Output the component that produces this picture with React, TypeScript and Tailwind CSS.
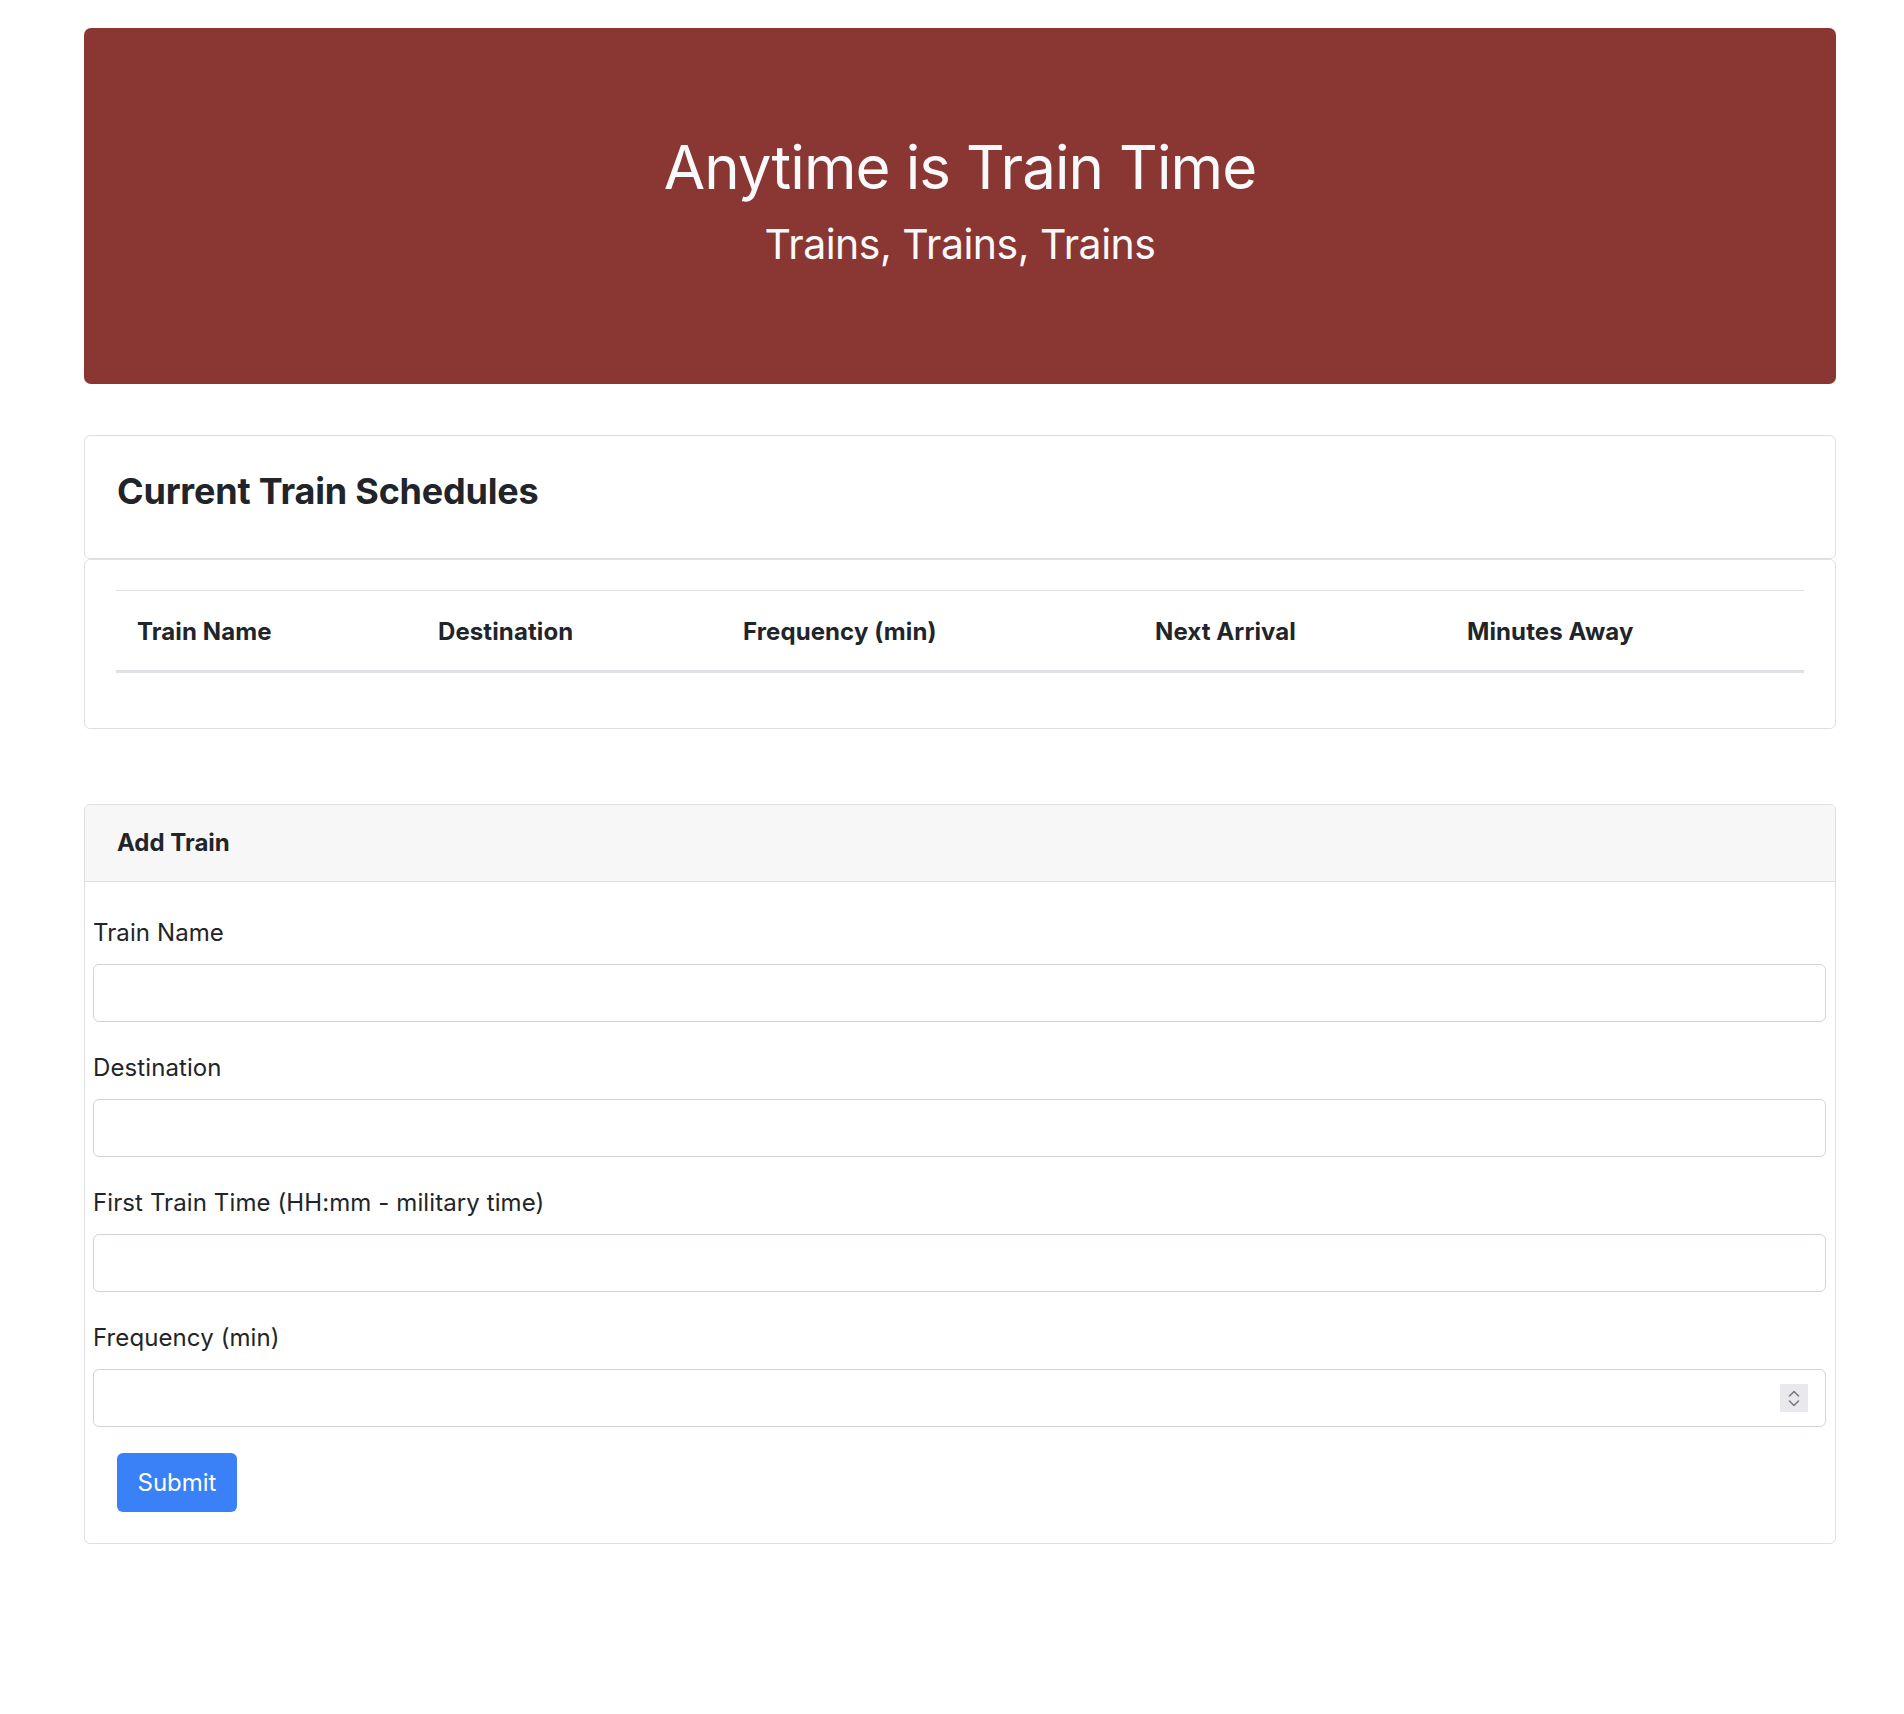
const columns = [
  { label: "Train Name", width: "w-[301px]" },
  { label: "Destination", width: "w-[305px]" },
  { label: "Frequency (min)", width: "w-[412px]" },
  { label: "Next Arrival", width: "w-[312px]" },
  { label: "Minutes Away", width: "w-[358px]" },
];

const fields = [
  { id: "train-name", label: "Train Name", number: false },
  { id: "destination", label: "Destination", number: false },
  { id: "first-time", label: "First Train Time (HH:mm - military time)", number: false },
  { id: "frequency", label: "Frequency (min)", number: true },
];

function Spinner() {
  return (
    <div className="pointer-events-none absolute right-[18px] top-1/2 flex h-[28px] w-[28px] -translate-y-1/2 flex-col items-center justify-center gap-[3px] bg-[#e9e9ed]">
      <svg width="12" height="7" viewBox="0 0 12 7" fill="none">
        <path d="M1.5 6 L6 1.5 L10.5 6" stroke="#7a7a80" strokeWidth="1.6" strokeLinecap="round" strokeLinejoin="round" />
      </svg>
      <svg width="12" height="7" viewBox="0 0 12 7" fill="none">
        <path d="M1.5 1 L6 5.5 L10.5 1" stroke="#7a7a80" strokeWidth="1.6" strokeLinecap="round" strokeLinejoin="round" />
      </svg>
    </div>
  );
}

export default function App() {
  return (
    <div className="min-h-[1714px] bg-white pt-[28px] text-[#212529] font-['Inter','Liberation_Sans',sans-serif]">
      <div className="ml-[84px] w-[1752px]">
        {/* Jumbotron */}
        <div className="flex h-[356px] flex-col items-center rounded-[7px] bg-[#8a3633] pt-[103px] text-[#f8f9fa]">
          <h1 className="text-[60px] font-normal leading-[72px] tracking-[-0.9px]">Anytime is Train Time</h1>
          <p className="mt-[16px] text-[41px] leading-[50px] tracking-[-0.5px]">Trains, Trains, Trains</p>
        </div>

        {/* Schedule title card */}
        <div className="mt-[51px] rounded-[6px] border border-[#dfdfdf] px-[32px] pb-[45px] pt-[34px]">
          <h4 className="text-[36px] font-bold leading-[43px] tracking-[-0.2px]">Current Train Schedules</h4>
        </div>

        {/* Schedule table card */}
        <div className="rounded-[6px] border border-[#dfdfdf] px-[31px] pb-[55px] pt-[30px]">
          <table className="w-[1688px] table-fixed border-collapse">
            <thead>
              <tr className="border-t border-b-[3px] border-t-[#dee2e6] border-b-[#dee2e6]">
                {columns.map((c) => (
                  <th
                    key={c.label}
                    className={`${c.width} h-[81px] px-[21px] pt-[3px] text-left align-middle text-[24px] font-bold leading-[36px] tracking-[0.1px]`}
                  >
                    {c.label}
                  </th>
                ))}
              </tr>
            </thead>
            <tbody />
          </table>
        </div>

        {/* Add train card */}
        <div className="mt-[75px] overflow-hidden rounded-[6px] border border-[#dfdfdf]">
          <div className="flex h-[77px] items-center border-b border-[#dfdfdf] bg-[#f7f7f7] px-[32px]">
            <h5 className="text-[24px] font-bold leading-[36px]">Add Train</h5>
          </div>
          <form className="pb-[31px] pl-[8px] pr-[9px] pt-[33px]" onSubmit={(e) => e.preventDefault()}>
            {fields.map((f) => (
              <div key={f.id} className="mb-[28px]">
                <label htmlFor={f.id} className="mb-[13px] block text-[24px] leading-[36px] tracking-[0.1px]">
                  {f.label}
                </label>
                <div className="relative">
                  <input
                    id={f.id}
                    type="text"
                    className="block h-[58px] w-full rounded-[6px] border border-[#ced4da] bg-white px-[18px] text-[24px] outline-none"
                  />
                  {f.number && <Spinner />}
                </div>
              </div>
            ))}
            <button
              type="submit"
              className="-mt-[2px] ml-[24px] h-[59px] w-[120px] rounded-[6px] bg-[#3a80f6] text-[24px] leading-[36px] text-white"
            >
              Submit
            </button>
          </form>
        </div>
      </div>
    </div>
  );
}
